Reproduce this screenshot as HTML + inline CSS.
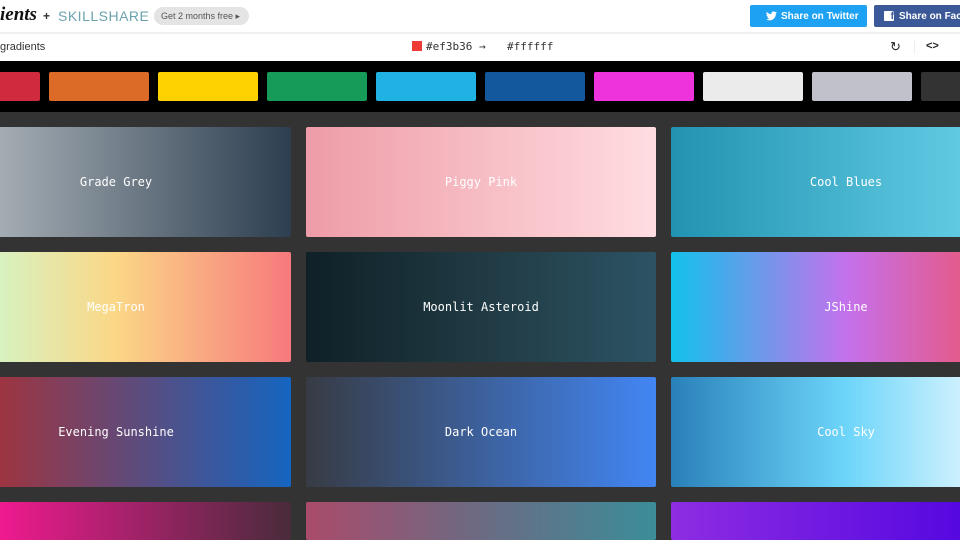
<!DOCTYPE html>
<html style="width:960px;height:540px;overflow:hidden"><head><meta charset="utf-8"><style>
*{margin:0;padding:0;box-sizing:border-box}
body{width:960px;height:540px;overflow:hidden;background:#333;font-family:"Liberation Sans",sans-serif;position:relative}
.hdr{position:absolute;left:0;top:0;width:960px;height:34px;background:#fff;border-bottom:2px solid #f0f0f0}
.tb{position:absolute;left:0;top:34px;width:960px;height:27px;background:#fff}
.band{position:absolute;left:0;top:61px;width:960px;height:51px;background:#000}
.sw{position:absolute;top:72px;width:100px;height:29px;border-radius:2px}
.card{position:absolute;width:350px;height:110px;border-radius:2px;color:#fff;font-family:"DejaVu Sans Mono","Liberation Mono",monospace;font-size:12px;display:flex;align-items:center;justify-content:center;overflow:hidden}
.btn{position:absolute;top:5px;height:22px;border-radius:2px;color:#fff;font-size:10px;font-weight:bold;display:flex;align-items:center;padding-left:16px}
.mono{font-family:"DejaVu Sans Mono","Liberation Mono",monospace;font-size:11px;color:#333;position:absolute}
</style></head><body>
<div class="hdr">
 <div style="position:absolute;left:0;top:4px;font-family:'Liberation Serif',serif;font-style:italic;font-weight:bold;font-size:19px;color:#111">ients</div>
 <div style="position:absolute;left:43px;top:9px;font-size:12px;font-weight:bold;color:#333">+</div>
 <div style="position:absolute;left:58px;top:8px;font-size:14px;color:#6aa3ae;letter-spacing:.5px">SKILLSHARE</div>
 <div style="position:absolute;left:154px;top:7px;width:95px;height:18px;border-radius:9px;background:#e4e4e4;color:#555;font-size:9px;line-height:18px;padding-left:7px">Get 2 months free ▸</div>
 <div class="btn" style="left:750px;width:117px;background:#1da1f2">
  <svg width="11" height="10" viewBox="0 0 24 20" style="margin-right:4px"><path fill="#fff" d="M24 2.4a10 10 0 0 1-2.8.8A5 5 0 0 0 23.3.4a10 10 0 0 1-3.1 1.2A4.9 4.9 0 0 0 11.8 6 14 14 0 0 1 1.7.9a4.9 4.9 0 0 0 1.5 6.6A5 5 0 0 1 1 6.9a4.9 4.9 0 0 0 3.9 4.8 5 5 0 0 1-2.2.1 4.9 4.9 0 0 0 4.6 3.4A9.9 9.9 0 0 1 0 17.3 14 14 0 0 0 7.5 19.5c9 0 14-7.5 14-14v-.6A10 10 0 0 0 24 2.4z"/></svg>Share on Twitter</div>
 <div class="btn" style="left:874px;width:100px;background:#3b5998;padding-left:10px">
  <span style="display:inline-block;width:10px;height:10px;background:#fff;border-radius:1px;margin-right:5px;color:#3b5998;font-size:10px;line-height:12px;text-align:right;overflow:hidden">f</span>Share on Face</div>
</div>
<div class="tb">
 <div style="position:absolute;left:0;top:7px;font-size:11px;color:#333">gradients</div>
 <div style="position:absolute;left:412px;top:7px;width:10px;height:10px;background:#ef3b36"></div>
 <div class="mono" style="left:426px;top:6px">#ef3b36 →</div>
 <div class="mono" style="left:507px;top:6px">#ffffff</div>
 <div style="position:absolute;left:890px;top:5px;font-size:13px;color:#222">↻</div>
 <div style="position:absolute;left:926px;top:6px;font-size:11px;color:#222;font-weight:bold">&lt;&gt;</div>
 <div style="position:absolute;left:914px;top:7px;width:1px;height:13px;background:#eee"></div>
</div>
<div class="band"></div>
<div class="sw" style="left:-60px;background:#d02a3e"></div>
<div class="sw" style="left:49px;background:#dc6b27"></div>
<div class="sw" style="left:158px;background:#fed200"></div>
<div class="sw" style="left:267px;background:#169c58"></div>
<div class="sw" style="left:376px;background:#1fb2e2"></div>
<div class="sw" style="left:485px;background:#13589c"></div>
<div class="sw" style="left:594px;background:#ef33dc"></div>
<div class="sw" style="left:703px;background:#ebebeb"></div>
<div class="sw" style="left:812px;background:#c1c1cb"></div>
<div class="sw" style="left:921px;background:#333"></div>

<div class="card" style="left:-59px;top:127px;background:linear-gradient(90deg,#bdc3c7,#2c3e50)">Grade Grey</div>
<div class="card" style="left:306px;top:127px;background:linear-gradient(90deg,#ee9ca7,#ffdde1)">Piggy Pink</div>
<div class="card" style="left:671px;top:127px;background:linear-gradient(90deg,#2193b0,#6dd5ed)">Cool Blues</div>
<div class="card" style="left:-59px;top:252px;background:linear-gradient(90deg,#c6ffdd,#fbd786,#f7797d)">MegaTron</div>
<div class="card" style="left:306px;top:252px;background:linear-gradient(90deg,#0f2027,#203a43,#2c5364)">Moonlit Asteroid</div>
<div class="card" style="left:671px;top:252px;background:linear-gradient(90deg,#12c2e9,#c471ed,#f64f59)">JShine</div>
<div class="card" style="left:-59px;top:377px;background:linear-gradient(90deg,#b92b27,#1565c0)">Evening Sunshine</div>
<div class="card" style="left:306px;top:377px;background:linear-gradient(90deg,#373b44,#4286f4)">Dark Ocean</div>
<div class="card" style="left:671px;top:377px;background:linear-gradient(90deg,#2980b9,#6dd5fa,#ffffff)">Cool Sky</div>
<div class="card" style="left:-59px;top:502px;height:38px;background:linear-gradient(90deg,#f0138f,#ee1a8f 17%,#4a2b3b)"></div>
<div class="card" style="left:306px;top:502px;height:38px;background:linear-gradient(90deg,#aa4b6b,#6b6b83,#3b8d99)"></div>
<div class="card" style="left:671px;top:502px;height:38px;background:linear-gradient(90deg,#8e2de2,#4a00e0)"></div>
</body></html>
